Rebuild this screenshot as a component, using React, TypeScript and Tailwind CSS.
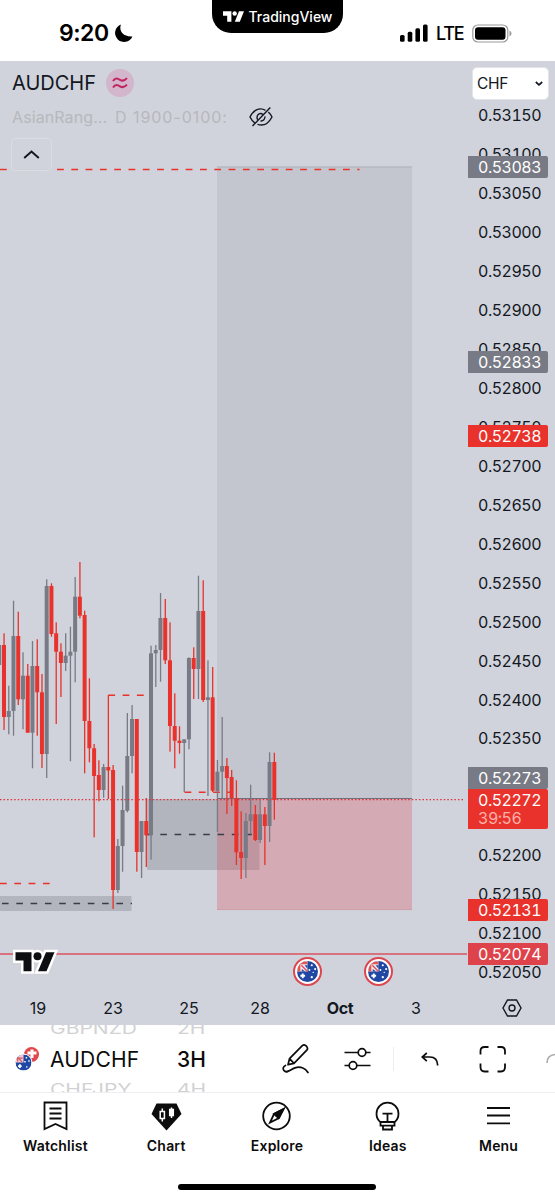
import type { ReactNode } from "react";

const UP = "#787b85";
const DOWN = "#e8322b";
const STEP = 4.742;

// [color, high, bodyTop, bodyBottom, low] in chart pixels, one entry per bar
const candles: [string, number, number, number, number][] = [
  [UP, 645, 645, 665, 665],
  [DOWN, 633.3, 645, 717, 730],
  [UP, 685.7, 711, 717, 734.3],
  [UP, 600.7, 636, 711, 735.7],
  [DOWN, 611.7, 636, 699.3, 705],
  [UP, 652.3, 675.7, 699.3, 729.3],
  [DOWN, 664, 675.7, 732.7, 732.7],
  [UP, 641, 666, 732.7, 768.3],
  [DOWN, 639.3, 666, 692.3, 735.7],
  [DOWN, 674, 692.3, 754, 768],
  [UP, 579.3, 586, 754, 778],
  [DOWN, 583.3, 586, 634, 636.7],
  [DOWN, 622.3, 633.3, 651.7, 724],
  [DOWN, 643.3, 651.7, 663, 697],
  [UP, 633.3, 655.7, 663, 671],
  [UP, 626.7, 651.7, 655.7, 761.3],
  [UP, 577, 596.7, 651.7, 682.3],
  [DOWN, 562, 596.7, 615.7, 618.3],
  [DOWN, 610.7, 615, 721, 773.3],
  [DOWN, 678.3, 721, 748.3, 762.3],
  [DOWN, 744, 748.3, 776, 837.3],
  [DOWN, 760.3, 775, 790, 801.3],
  [UP, 764, 767, 790, 797.7],
  [DOWN, 695, 767, 770.5, 799],
  [DOWN, 765, 770, 890, 909],
  [UP, 839, 846, 890, 893],
  [UP, 785.7, 810, 846, 871.7],
  [UP, 713, 756, 810.7, 812.3],
  [UP, 705, 719, 756, 773.3],
  [DOWN, 719, 719, 852, 871.7],
  [UP, 821, 821, 852, 878],
  [DOWN, 798, 821, 835.3, 867],
  [UP, 645.7, 653.3, 835, 859.7],
  [UP, 645, 650, 653.3, 687],
  [UP, 593, 618, 650, 681.7],
  [DOWN, 599, 618, 660.3, 664],
  [DOWN, 622.3, 660.3, 726, 751.7],
  [DOWN, 693.3, 726, 740.7, 768.3],
  [DOWN, 726.3, 740.7, 743, 753.7],
  [UP, 739.3, 739.3, 743, 792],
  [UP, 657.3, 658, 739.3, 749.3],
  [DOWN, 647.3, 658, 669, 699],
  [UP, 575.7, 611, 669, 699],
  [DOWN, 580.3, 611, 700, 702],
  [UP, 660.3, 697.3, 700, 796],
  [DOWN, 667, 697.3, 790.7, 792],
  [UP, 760, 771.7, 791, 832],
  [UP, 717, 766, 771.7, 798.3],
  [DOWN, 758, 766, 778, 814],
  [DOWN, 770, 777, 798.3, 806],
  [DOWN, 780.3, 798.3, 852.3, 865],
  [DOWN, 811.3, 852, 858, 879],
  [UP, 813, 821, 858, 878],
  [UP, 784.7, 814.3, 821, 834.3],
  [DOWN, 805, 814.3, 840, 841],
  [UP, 800, 814.3, 840, 843],
  [DOWN, 807, 814.3, 826, 865],
  [UP, 752.3, 762, 826, 842],
  [DOWN, 752.7, 762, 800, 819.7],
];

const prices = Array.from({ length: 23 }, (_, i) => (0.5315 - i * 0.0005).toFixed(5));

function Chart() {
  return (
    <svg className="block h-[964px] w-[555px]" viewBox="0 61 555 964">
      <rect x="217" y="166.5" width="195" height="632" fill="#787b85" fillOpacity="0.14" />
      <path d="M217 167H412" stroke="#a9acb4" strokeWidth="0.8" />
      <rect x="147" y="799" width="112.5" height="71" fill="#787b85" fillOpacity="0.34" />
      <rect x="0" y="896" width="131.5" height="15" fill="#787b85" fillOpacity="0.34" />
      <rect x="217" y="798.5" width="195" height="111.5" fill="#dd4e59" fillOpacity="0.3" />
      <path d="M217 909.6H412" stroke="#cd939e" strokeWidth="0.5" />
      <path d="M2 903.5H132" stroke="#3a3d47" strokeWidth="1.3" strokeDasharray="6.6 7.7" />
      <path d="M146 834.5H252" stroke="#3a3d47" strokeWidth="1.3" strokeDasharray="6.6 7.7" />
      <g stroke={DOWN} strokeWidth="1.4" strokeDasharray="6.8 7.5">
        <path d="M0 169.5H6.8" />
        <path d="M57 169.5H359.5" />
        <path d="M0 883.5H50" />
        <path d="M108.3 695.2H146" />
        <path d="M184.5 792.3H232" />
      </g>
      <path d="M14 169.5H51" stroke="#d9bfc4" strokeWidth="1" strokeDasharray="6.8 7.5" />
      <path d="M217.5 798.5H412" stroke="#6e717b" strokeWidth="1.2" />
      {candles.map(([color, high, top, bottom, low], i) => {
        const x = 4 + (i - 1) * STEP;
        return (
          <g key={i} fill={color}>
            <rect x={x - 0.6} y={high} width="1.3" height={low - high} />
            <rect x={x - 2} y={top} width="4" height={bottom - top} />
          </g>
        );
      })}
      <path d="M0 799.6H465" stroke="#e0303c" strokeWidth="1.4" strokeDasharray="1.5 2.05" />
      <path d="M0 954H467" stroke="#d9535f" strokeWidth="1.6" />
    </svg>
  );
}

function TvLogo({ className }: { className: string }) {
  return (
    <svg className={className} viewBox="0 0 40 20" fill="currentColor">
      <path d="M0 0H16V20H8V8.5H0Z" />
      <circle cx="22.2" cy="4.2" r="4.2" />
      <path d="M30.5 0H40L32 20H22.5Z" />
    </svg>
  );
}

function PriceTag({ className, children }: { className: string; children: ReactNode }) {
  return (
    <div
      className={`absolute left-[468px] w-20 rounded-r-[2px] pl-[10px] text-[16px] leading-[22px] tracking-[-0.5px] tabular-nums text-white ${className}`}
    >
      {children}
    </div>
  );
}

function Flag({ className }: { className: string }) {
  return (
    <svg className={className} viewBox="0 0 22 22">
      <clipPath id="flag-clip">
        <circle cx="11" cy="11" r="11" />
      </clipPath>
      <g clipPath="url(#flag-clip)">
        <rect width="22" height="22" fill="#1f47a3" />
        <rect width="11" height="11" fill="#f5e9ed" />
        <path d="M0 2H11M2 0V11" stroke="#e0584f" strokeWidth="3" />
        <path d="M4.5 4.5L11 11" stroke="#d9535f" strokeWidth="1.5" />
        <path d="M5 8.5V11H8.5M8 4.5H11V8" fill="#1f47a3" />
        <path d="M6 13V18M3.5 15.5H8.5" stroke="white" strokeWidth="2" />
        <g fill="white">
          <circle cx="15.5" cy="4.5" r="1.1" />
          <circle cx="13" cy="9.5" r="1" />
          <circle cx="19" cy="8.5" r="1.1" />
          <circle cx="17" cy="12" r="0.7" />
          <circle cx="15.5" cy="17" r="1.2" />
        </g>
      </g>
    </svg>
  );
}

function EventMarker({ className }: { className: string }) {
  return (
    <div
      className={`absolute top-[896px] flex size-[29px] items-center justify-center rounded-full border-2 border-[#dc4650] bg-white ${className}`}
    >
      <Flag className="size-[21px]" />
    </div>
  );
}

function StatusBar() {
  return (
    <header className="relative flex h-[61px] shrink-0 bg-white">
      <div className="flex w-[212px] items-center pt-[5px] pl-[59px]">
        <span className="w-[55px] text-[23px] font-semibold tracking-[-0.5px]">9:20</span>
        <svg className="size-[19px]" viewBox="0 0 19 19">
          <path d="M7 .5C5 5 7 13 18.4 12.4A9 9 0 1 1 7 .5Z" />
        </svg>
      </div>
      <div className="flex h-[33px] w-[131px] items-center justify-center gap-[5px] rounded-b-[19px] bg-black text-white">
        <TvLogo className="h-[11px] w-[21px]" />
        <span className="text-[14px] font-medium">TradingView</span>
      </div>
      <div className="flex flex-1 items-center pt-[5px] pl-[56px]">
        <svg className="h-[18px] w-[30px]" viewBox="0 0 30 18">
          <rect x="1" y="11" width="4.6" height="6.8" rx="1.5" />
          <rect x="8.7" y="7.8" width="4.6" height="10" rx="1.5" />
          <rect x="16.4" y="4.3" width="4.6" height="13.5" rx="1.5" />
          <rect x="24" y="0.5" width="4.6" height="17.3" rx="1.5" />
        </svg>
        <span className="ml-[7px] w-[36px] pt-px text-[18px] font-medium tracking-[-1.2px]">LTE</span>
        <svg className="h-[19px] w-[40px]" viewBox="0 0 40 19">
          <rect x="0.8" y="1" width="35" height="17" rx="5" fill="none" stroke="#999" strokeWidth="1.2" />
          <rect x="3" y="3.2" width="30.5" height="12.6" rx="3" />
          <path d="M37.5 6.5Q39.5 7.5 39.5 9.5Q39.5 11.5 37.5 12.5Z" fill="#999" />
        </svg>
      </div>
    </header>
  );
}

function ChartPanel() {
  return (
    <section className="relative h-[964px] shrink-0 overflow-hidden bg-[#d0d3db] text-[#131722]">
      <Chart />

      <div className="absolute top-0 left-0 flex w-[290px] flex-col pl-3">
        <div className="mt-[7px] flex h-[30px] items-center">
          <span className="w-[94px] text-[20px]">AUDCHF</span>
          <span className="flex size-[28px] items-center justify-center rounded-full bg-[#d3b5cc]">
            <svg className="h-[12px] w-[16px]" viewBox="0 0 16 12" fill="none" stroke="#c2265e" strokeWidth="2">
              <path d="M1 4C3.5 0 6 1.5 8 2.8S12.5 4 15 1.2M1 10.5C3.5 6.5 6 8 8 9.3S12.5 10.5 15 7.7" />
            </svg>
          </span>
        </div>
        <div className="mt-[5px] flex h-[28px] items-center text-[16px] text-[#b7b8bd]">
          <span className="w-[103px] tracking-[0.1px]">AsianRang...</span>
          <span className="w-[133px] tracking-[0.95px]">D 1900-0100:</span>
          <svg className="h-[22px] w-[26px] text-[#131722]" viewBox="0 0 26 22" fill="none" stroke="currentColor" strokeWidth="1.4">
            <path d="M17.5 4.3C12 1 5.5 3.5 2 11c1.2 2.5 2.8 4.5 4.8 5.9M9.5 18.4c5.500 1.800 11-.8 14.500-7.400-1-2-2.200-3.700-3.700-5" />
            <path d="M15 8.500C12.500 6.300 8.900 8 9 11.500c0 .9.200 1.600.8 2.300M12.500 15c2.700.3 4.800-2 4.400-4.700" />
            <path d="M4.500 20L22.300 1.500" />
          </svg>
        </div>
        <div className="mt-[7px] -ml-[1px] flex h-[33px] w-[41px] items-center justify-center rounded-[4px] border border-[#d9dce3] bg-[#d0d3db]/70">
          <svg className="h-[9px] w-[17px]" viewBox="0 0 17 9" fill="none" stroke="currentColor" strokeWidth="2">
            <path d="M1.200 8L8.500 1.500L15.800 8" />
          </svg>
        </div>
      </div>

      <div className="absolute top-[34.500px] left-[478px] flex flex-col text-[16px] tracking-[-0.5px] tabular-nums">
        {prices.map((price) => (
          <span key={price} className="flex h-[38.98px] items-center">
            {price}
          </span>
        ))}
      </div>
      <PriceTag className="top-[95px] bg-[#787b85]">0.53083</PriceTag>
      <PriceTag className="top-[290px] bg-[#787b85]">0.52833</PriceTag>
      <PriceTag className="top-[364px] bg-[#e8322b]">0.52738</PriceTag>
      <PriceTag className="top-[706px] bg-[#787b85]">0.52273</PriceTag>
      <PriceTag className="top-[728px] flex h-10 flex-col bg-[#e8322b]">
        <span>0.52272</span>
        <span className="-mt-[4px] text-[#ffb0aa]">39:56</span>
      </PriceTag>
      <PriceTag className="top-[838px] bg-[#e8322b]">0.52131</PriceTag>
      <PriceTag className="top-[882px] bg-[#de434b]">0.52074</PriceTag>

      <div className="absolute top-[6px] left-[472px] flex h-[33px] w-[77px] items-center justify-between rounded-[5px] border border-[#e2e4ea] bg-white pr-[5px] pl-[4px] text-[15.500px] tracking-[-0.300px]">
        <span>CHF</span>
        <svg className="h-[5px] w-[8px]" viewBox="0 0 8 5" fill="none" stroke="currentColor" strokeWidth="1.700">
          <path d="M.8 1L4 3.800L7.200 1" />
        </svg>
      </div>

      <svg className="absolute top-[887px] left-[12px] h-[28px] w-[48px]" viewBox="0 0 48 28">
        <g fill="white" stroke="white" strokeWidth="5">
          <path d="M3.500 4.200H19.500V23.200H11.500V12.500H3.500Z" />
          <path d="M34 4.200H42.500L34.500 23.200H26Z" />
          <circle cx="25.500" cy="8.200" r="4" />
        </g>
        <g fill="#0c0e12">
          <path d="M3.500 4.200H19.500V23.200H11.500V12.500H3.500Z" />
          <path d="M34 4.200H42.500L34.500 23.200H26Z" />
          <circle cx="25.500" cy="8.200" r="4" />
        </g>
      </svg>
      <EventMarker className="left-[292.500px]" />
      <EventMarker className="left-[363.500px]" />

      <div className="absolute top-[936px] left-0 flex h-[22px] w-full items-center text-center text-[16px]">
        <span className="ml-[17px] w-[42px]">19</span>
        <span className="ml-[33px] w-[42px]">23</span>
        <span className="ml-[34px] w-[42px]">25</span>
        <span className="ml-[29px] w-[42px]">28</span>
        <span className="ml-[38px] w-[42px] font-bold tracking-[-0.300px]">Oct</span>
        <span className="ml-[34px] w-[42px]">3</span>
        <svg className="ml-[65px] h-[18px] w-[20px]" viewBox="0 0 20 18" fill="none" stroke="currentColor" strokeWidth="1.400">
          <path d="M5.500 1H14.500L19 9L14.500 17H5.500L1 9Z" />
          <circle cx="10" cy="9" r="3" />
        </svg>
      </div>
    </section>
  );
}

function Toolbar() {
  return (
    <div className="flex h-[68px] shrink-0 overflow-hidden border-b border-[#efeff1] bg-white text-[#0c0c0c]">
      <div className="flex w-[50px] items-center pl-[15px]">
        <svg className="h-[24px] w-[25px]" viewBox="0 0 25 24">
          <circle cx="16.500" cy="7.500" r="7.500" fill="#e0484d" />
          <path d="M17 2.500V11M12.500 6H21.500" stroke="white" strokeWidth="3" />
          <circle cx="8.500" cy="15.500" r="9" fill="white" />
          <svg x="0.500" y="7.500" width="16" height="16" viewBox="0 0 22 22">
            <circle cx="11" cy="11" r="11" fill="#1f47a3" />
            <path d="M11 0V11H0A11 11 0 0 1 11 0Z" fill="#f1cbd3" />
            <path d="M3 4L9 10M3 9.500V5H10" stroke="#d9535f" strokeWidth="1.700" fill="none" />
            <path d="M6 13.500V18.500M3.500 16H8.500" stroke="white" strokeWidth="2.500" />
            <path d="M15 3.500v2M13 9v2M18.500 8v2M15.500 16v2" stroke="white" strokeWidth="2" />
          </svg>
        </svg>
      </div>
      <div className="flex w-[127px] flex-col text-[21px] leading-[32px]">
        <span className="-mt-[12px] h-[31px] origin-left scale-y-75 text-[#d2d2d4]">GBPNZD</span>
        <span className="tracking-[0.200px]">AUDCHF</span>
        <span className="-mt-[2px] origin-left scale-y-75 text-[#d2d2d4]">CHFJPY</span>
      </div>
      <div className="flex w-[105px] flex-col text-[21px] leading-[32px]">
        <span className="-mt-[12px] h-[31px] origin-left scale-y-75 text-[#d2d2d4]">2H</span>
        <span className="font-medium">3H</span>
        <span className="-mt-[2px] origin-left scale-y-75 text-[#d2d2d4]">4H</span>
      </div>
      <div className="flex flex-1 items-center">
        <svg className="h-[30px] w-[28px]" viewBox="0 0 28 30" fill="none" stroke="currentColor" strokeWidth="1.700" strokeLinejoin="round">
          <path d="M7.500 14.700L20.300 1.700Q22 .2 23.800 1.700L24.800 2.700Q26.200 4.500 24.800 6.200L12 19.300L6 20.700ZM7.500 14.700L12 19.300" />
          <path d="M3.500 21.500C1 22.500.6 25 2 26.600C4.500 30 8 25.800 13 23.900C18 22.200 23.300 23.800 26 28.500" strokeLinecap="round" />
        </svg>
        <svg className="ml-[34px] h-[24px] w-[27px]" viewBox="0 0 27 24" fill="none" stroke="currentColor" strokeWidth="1.700">
          <path d="M.5 5.500H14M22 5.500H26.500M.5 18.500H5M13 18.500H26.500" />
          <circle cx="18" cy="5.500" r="3.800" />
          <circle cx="9" cy="18.500" r="3.800" />
        </svg>
        <span className="ml-[22px] h-[24px] w-px bg-[#ededef]" />
        <svg className="ml-[27px] h-[14px] w-[18px]" viewBox="0 0 18 14" fill="none" stroke="currentColor" strokeWidth="1.700">
          <path d="M5.800 1L1.200 5L5.800 9.200M1.200 5H9C14 5 16.500 8 16.700 13.500" />
        </svg>
        <svg className="ml-[40px] h-[28px] w-[28px]" viewBox="0 0 28 28" fill="none" stroke="currentColor" strokeWidth="1.800">
          <path d="M1.500 9.500V6Q1.500 2 5.500 2H9.500M18.500 2H22Q26 2 26 6V9.500M26 18.500V22Q26 26.500 22 26.500H18.500M9.500 26.500H5.500Q1.500 26.500 1.500 22V18.500" />
        </svg>
        <svg className="ml-[39px] h-[11px] w-[9px] shrink-0 text-[#aaa]" viewBox="0 0 9 11" fill="none" stroke="currentColor" strokeWidth="1.600">
          <path d="M1 10C1 5 4 2 9 1.500" />
        </svg>
      </div>
    </div>
  );
}

const tabs: { label: string; icon: ReactNode }[] = [
  {
    label: "Watchlist",
    icon: (
      <path d="M4.500 2.500H26.500V29L15.500 24L4.500 29ZM9.500 8.500H21.500M9.500 13.500H21.500M9.500 18.500H21.500" />
    ),
  },
  {
    label: "Chart",
    icon: (
      <>
        <path d="M5.500 3.500H25.500L30.500 14L15.500 30.500L.5 14Z" fill="currentColor" stroke="none" />
        <g stroke="white" strokeWidth="1.500">
          <path d="M9.200 11.500H13.400V18.500H9.200ZM11.300 8.500V11.500M11.300 18.500V21.500M20.500 7.500V18" />
          <path d="M18.700 9.500H22.300V15.500H18.700Z" fill="white" />
        </g>
      </>
    ),
  },
  {
    label: "Explore",
    icon: (
      <>
        <circle cx="15.500" cy="16" r="13.300" />
        <path d="M22.500 9L13 14L9 22.500L18 18Z" />
        <path d="M22.500 9L13 14L17.500 18Z" fill="currentColor" />
      </>
    ),
  },
  {
    label: "Ideas",
    icon: (
      <>
        <path d="M9 22.500C6 20.500 4.500 17.300 4.500 13.700A11 11 0 0 1 26.500 13.700C26.500 17.300 25 20.500 22 22.500" />
        <path d="M8.500 22H22.500V25.700H8.500ZM11 25.700H20V29.500H11ZM10.500 13.700H20.500M15.500 13.700V22" />
      </>
    ),
  },
  {
    label: "Menu",
    icon: <path d="M4 8H27M4 15.500H27M4 23.300H27" />,
  },
];

function TabBar() {
  return (
    <nav className="grid h-[107px] shrink-0 grid-cols-5 bg-white pt-[7px] pr-px text-[#0c0c0c]">
      {tabs.map((tab) => (
        <div key={tab.label} className="flex flex-col items-center">
          <svg className="size-[31px]" viewBox="0 0 31 31" fill="none" stroke="currentColor" strokeWidth="1.800">
            {tab.icon}
          </svg>
          <span className="mt-[5px] text-[14px] leading-5 font-semibold tracking-[0.200px]">{tab.label}</span>
        </div>
      ))}
      <div className="col-span-5 mx-auto mt-[17px] h-[6px] w-[198px] self-start rounded-full bg-black" />
    </nav>
  );
}

export default function App() {
  return (
    <main className="flex h-[1200px] w-[555px] flex-col overflow-hidden bg-white font-['Inter',sans-serif] text-black">
      <StatusBar />
      <ChartPanel />
      <Toolbar />
      <TabBar />
    </main>
  );
}
